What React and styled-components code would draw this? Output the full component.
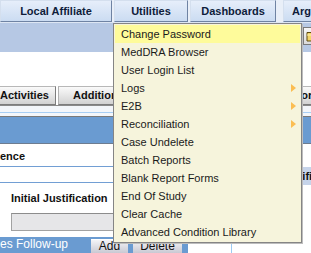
import styled, { createGlobalStyle } from "styled-components";

const GlobalStyle = createGlobalStyle`
  html, body {
    margin: 0;
    padding: 0;
    background: #fff;
  }
  body {
    font-family: "Liberation Sans", Arial, sans-serif;
  }
`;

const navItems = [
  { label: "Local Affiliate", width: 112, gap: 2 },
  { label: "Utilities", width: 74, gap: 2 },
  { label: "Dashboards", width: 86, gap: 7 },
  { label: "Argus", width: 50, gap: 0 },
];

const tabs = [
  { label: "Activities", width: 56, clipped: true },
  { label: "Additional Info", width: 186 },
  { label: "Regulatory Reports", width: 120 },
];

const menuItems = [
  { label: "Change Password", active: true },
  { label: "MedDRA Browser" },
  { label: "User Login List" },
  { label: "Logs", sub: true },
  { label: "E2B", sub: true },
  { label: "Reconciliation", sub: true },
  { label: "Case Undelete" },
  { label: "Batch Reports" },
  { label: "Blank Report Forms" },
  { label: "End Of Study" },
  { label: "Clear Cache" },
  { label: "Advanced Condition Library" },
];

const App = () => {
  return (
    <Page>
      <GlobalStyle />
      <MenuBar>
        {navItems.map((item) => (
          <NavButton key={item.label} $width={item.width} $gap={item.gap}>
            {item.label}
          </NavButton>
        ))}
      </MenuBar>
      <SubBar>
        <FolderButton>
          <svg width="14" height="12" viewBox="0 0 14 12">
            <path d="M1 2.5h4l1.2 1.3H12.5v7.2H1z" fill="#f3d56a" stroke="#5c4a12" strokeWidth="1" />
            <path d="M1 5h11.5" stroke="#fff2b0" strokeWidth="1" />
          </svg>
        </FolderButton>
      </SubBar>
      <Spacer />
      <TabRow>
        {tabs.map((tab) => (
          <Tab key={tab.label} $width={tab.width} $clipped={tab.clipped}>
            {tab.label}
          </Tab>
        ))}
      </TabRow>
      <Strip />
      <BlueBand />
      <Content>
        <LeftPane>
          <FieldRow>ence</FieldRow>
          <EmptyRow />
          <LabelRow>Initial Justification</LabelRow>
          <TextBox />
          <BottomBar>
            <BarLabel>es Follow-up</BarLabel>
            <SmallButton $width={37} $first>Add</SmallButton>
            <SmallButton $width={49}>Delete</SmallButton>
          </BottomBar>
        </LeftPane>
        <RightPane>
          <RightLabel>Final Justification</RightLabel>
        </RightPane>
      </Content>

      <Dropdown>
        {menuItems.map((item) => (
          <MenuItem key={item.label} $active={item.active}>
            <span>{item.label}</span>
            {item.sub && <Arrow />}
          </MenuItem>
        ))}
      </Dropdown>
    </Page>
  );
};

export default App;

const Page = styled.div`
  position: relative;
  width: 311px;
  height: 253px;
  overflow: hidden;
  background: #fff;
`;

const MenuBar = styled.div`
  display: flex;
  height: 22px;
  background: #e9eff8;
`;

const NavButton = styled.div`
  flex: 0 0 ${(p) => p.$width}px;
  margin-right: ${(p) => p.$gap}px;
  box-sizing: border-box;
  height: 22px;
  border: 1px solid #6f83a3;
  border-top-color: #d4dfee;
  border-left-color: #d4dfee;
  background: linear-gradient(#e6eefa, #cbdcf2);
  color: #0e1c3a;
  font-size: 11px;
  font-weight: bold;
  line-height: 20px;
  text-align: center;
  white-space: nowrap;
  overflow: hidden;
`;

const SubBar = styled.div`
  display: flex;
  justify-content: flex-end;
  align-items: flex-start;
  box-sizing: border-box;
  height: 30px;
  padding-top: 4px;
  border-top: 1px solid #dde6f3;
  background: #b6c8e4;
`;

const FolderButton = styled.div`
  display: flex;
  align-items: center;
  justify-content: center;
  box-sizing: border-box;
  width: 20px;
  height: 18px;
  margin-right: -12px;
  border: 1px solid #7a7a7a;
  background: linear-gradient(#f6f6f6, #dadada);
`;

const Spacer = styled.div`
  height: 34px;
`;

const TabRow = styled.div`
  display: flex;
  gap: 2px;
  height: 19px;
  white-space: nowrap;
`;

const Tab = styled.div`
  flex: 0 0 ${(p) => p.$width}px;
  box-sizing: border-box;
  height: 19px;
  padding-left: ${(p) => (p.$clipped ? 0 : 14)}px;
  border: 1px solid #7d7d7d;
  border-top-color: #b8b8b8;
  border-left: ${(p) => (p.$clipped ? "none" : "1px solid #b0b0b0")};
  background: linear-gradient(#fafafa, #d2d2d2);
  color: #111;
  font-size: 11px;
  font-weight: bold;
  line-height: 17px;
  overflow: hidden;
`;

const Strip = styled.div`
  box-sizing: border-box;
  height: 12px;
  border-top: 1px solid #8a8a8a;
  border-bottom: 1px solid #7a7a7a;
  background: linear-gradient(
    to bottom,
    #f3f6fa 0 6px,
    #a7cef4 6px 7px,
    #f3f6fa 7px
  );
`;

const BlueBand = styled.div`
  height: 26px;
  border-bottom: 1px solid #6d7c90;
  background: #6a9bd1;
`;

const Content = styled.div`
  display: flex;
  height: 109px;
`;

const LeftPane = styled.div`
  display: flex;
  flex-direction: column;
  width: 237px;
  border-right: 1px solid #9ccaf2;
`;

const FieldRow = styled.div`
  box-sizing: border-box;
  height: 23px;
  padding-top: 2px;
  border-bottom: 1px solid #729fd4;
  color: #111;
  font-size: 11px;
  font-weight: bold;
  line-height: 20px;
`;

const EmptyRow = styled.div`
  height: 15px;
  border-bottom: 1px solid #729fd4;
`;

const LabelRow = styled.div`
  height: 30px;
  padding-left: 11px;
  color: #111;
  font-size: 11px;
  font-weight: bold;
  line-height: 30px;
`;

const TextBox = styled.div`
  box-sizing: border-box;
  width: 220px;
  height: 18px;
  margin-left: 11px;
  border: 1px solid #a2a2a2;
  border-top-color: #8c8c8c;
  background: #e6e6e8;
`;

const BottomBar = styled.div`
  display: flex;
  align-items: flex-end;
  width: 188px;
  height: 16px;
  margin-top: 6px;
  background: #6a9bd1;
`;

const BarLabel = styled.div`
  flex: 0 0 88px;
  color: #fff;
  font-size: 12px;
  line-height: 17px;
  white-space: nowrap;
`;

const SmallButton = styled.div`
  flex: 0 0 ${(p) => p.$width}px;
  box-sizing: border-box;
  height: 14px;
  margin-left: ${(p) => (p.$first ? 3 : 5)}px;
  border-top: 1px solid #fff;
  background: linear-gradient(#f4f4f7, #c9c9d3);
  color: #111;
  font-size: 12px;
  line-height: 13px;
  text-align: center;
`;

const RightPane = styled.div`
  flex: 1;
  padding-top: 23px;
`;

const RightLabel = styled.div`
  height: 18px;
  padding-left: 19px;
  background: #c6d4ea;
  color: #111;
  font-size: 11px;
  font-weight: bold;
  line-height: 18px;
  white-space: nowrap;
`;

const Dropdown = styled.div`
  position: absolute;
  left: 113px;
  top: 23px;
  box-sizing: border-box;
  width: 189px;
  padding: 1px;
  border: 1px solid #858585;
  background: #f6f4dc;
  box-shadow: 1px 1px 0 #bdbdbd;
`;

const MenuItem = styled.div`
  display: flex;
  align-items: center;
  justify-content: space-between;
  height: 18px;
  padding: 0 4px 0 6px;
  background: ${(p) => (p.$active ? "#fefb9b" : "transparent")};
  color: #1a1a1a;
  font-size: 11px;
  white-space: nowrap;
`;

const Arrow = styled.span`
  width: 0;
  height: 0;
  border-top: 4.5px solid transparent;
  border-bottom: 4.5px solid transparent;
  border-left: 5px solid #fbbd52;
`;
